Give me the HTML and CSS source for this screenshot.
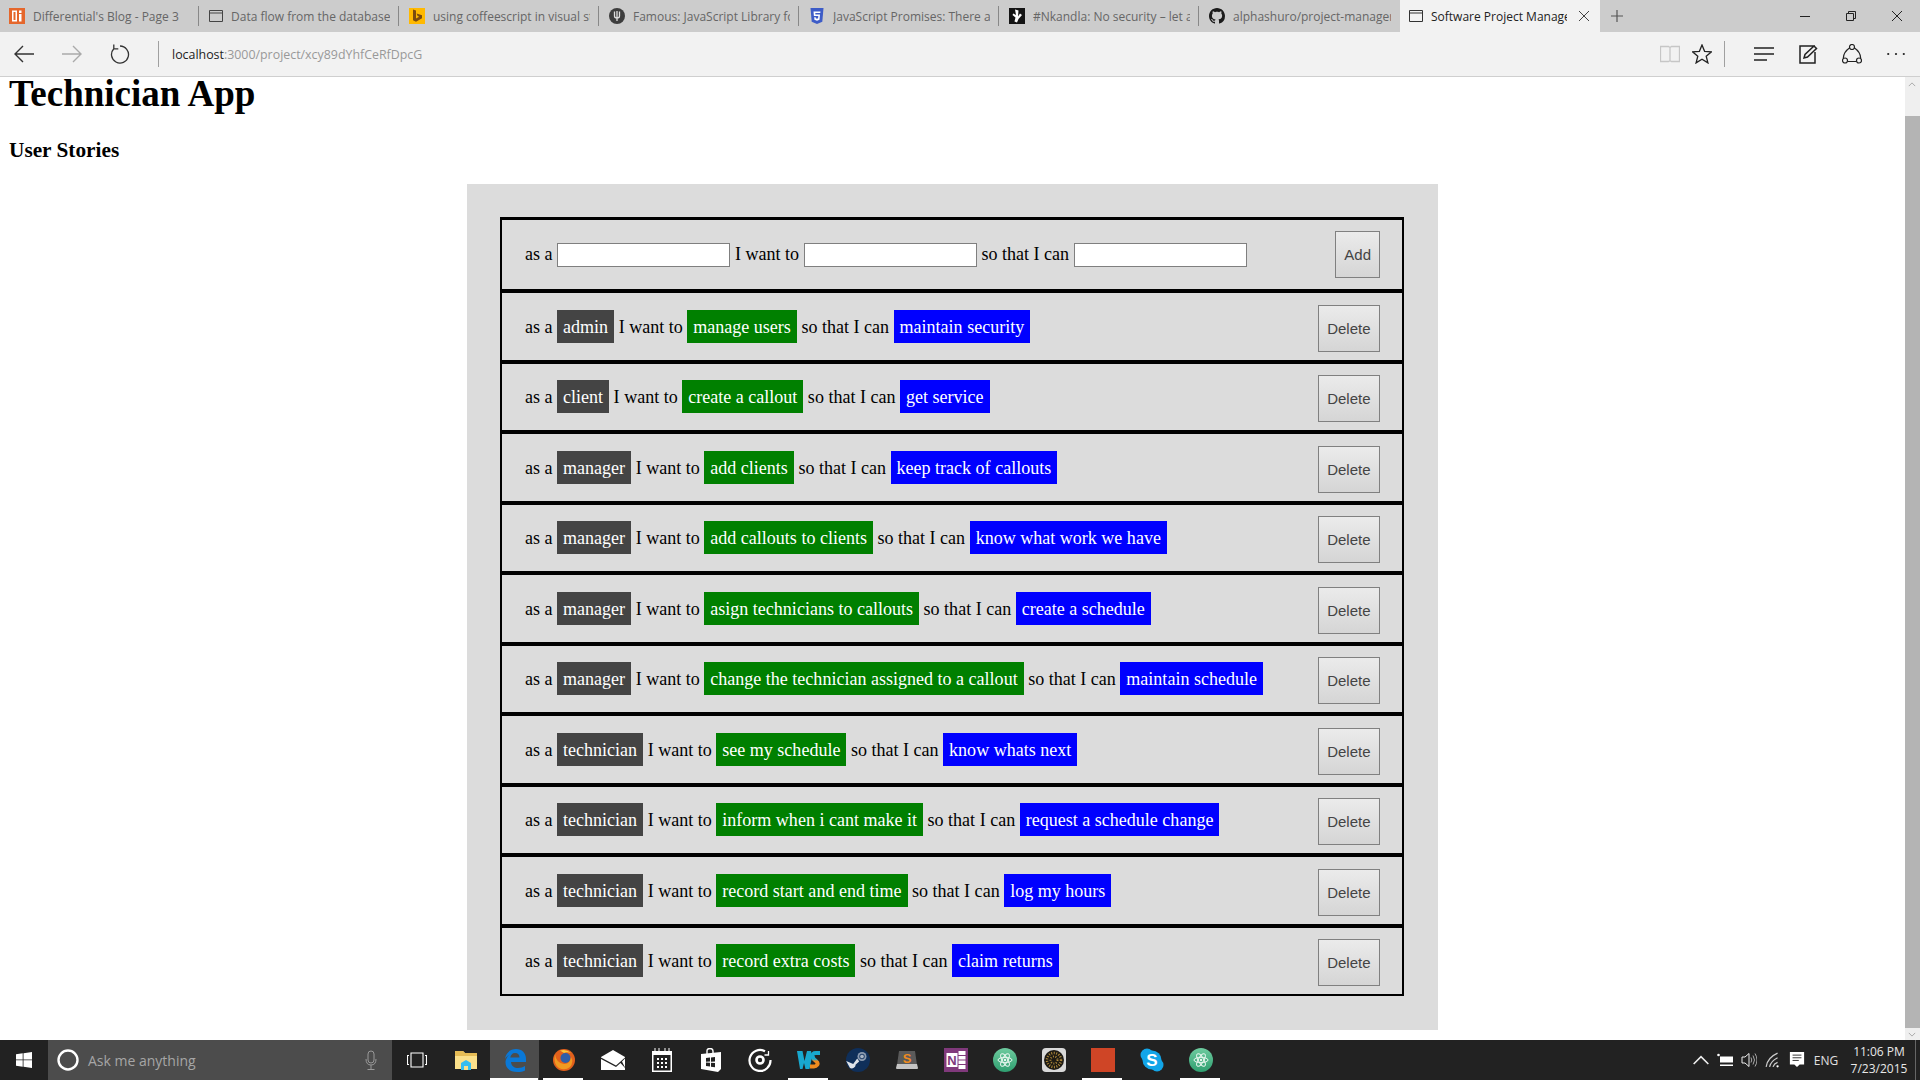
FILE: index.html
```html
<!DOCTYPE html>
<html lang="en">
<head>
<meta charset="utf-8">
<title>Software Project Manager</title>
<link rel="stylesheet" href="styles.css">
</head>
<body>
<div class="screen">
  <div class="tabstrip">
    <div class="tab">
      <svg class="fav" viewBox="0 0 16 16"><rect width="16" height="16" fill="#e5672c"/><path d="M3 2.500h5v11H3zM4.500 4v8H6.500V4z" fill="#fff" fill-rule="evenodd"/><rect x="10" y="2.500" width="2.500" height="2.500" fill="#fff"/><rect x="10" y="6" width="2.500" height="7.500" fill="#fff"/></svg>
      <span class="tab-title">Differential's Blog - Page 3</span><i class="tab-sep"></i>
    </div>
    <div class="tab">
      <svg class="fav fav-page" viewBox="0 0 14 14"><path d="M.5 1.500h13v11H.5zM.5 4h13" fill="none" stroke="#444" stroke-width="1"/></svg>
      <span class="tab-title">Data flow from the database</span><i class="tab-sep"></i>
    </div>
    <div class="tab">
      <svg class="fav" viewBox="0 0 16 16"><rect width="16" height="16" fill="#ffb900"/><path d="M4 1.500l3 1v8l3.200-1.800-1.600-.8-1-2.500 5.400 1.900v2.900L7 13.800 4 12.200z" fill="#7a4b10"/></svg>
      <span class="tab-title">using coffeescript in visual st</span><i class="tab-sep"></i>
    </div>
    <div class="tab">
      <svg class="fav" viewBox="0 0 16 16"><circle cx="8" cy="8" r="8" fill="#3d3d3d"/><path d="M5.500 3.500v4.500q0 2 2.500 2t2.500-2V3.500M8 3v10" fill="none" stroke="#ddd" stroke-width="1.300"/></svg>
      <span class="tab-title">Famous: JavaScript Library fo</span><i class="tab-sep"></i>
    </div>
    <div class="tab">
      <svg class="fav" viewBox="0 0 16 16"><path d="M1.500 0h13l-1.200 13.800L8 16l-5.300-2.200z" fill="#3d5cc7"/><path d="M11.500 3.500h-7l.4 4.500h4.400l-.2 2.300-1.100.4-1.200-.4-.1-1H5.200l.2 2.500L8 12.700l2.500-.9.5-5.300H6.400l-.1-1.500h5z" fill="#fff"/></svg>
      <span class="tab-title">JavaScript Promises: There a</span><i class="tab-sep"></i>
    </div>
    <div class="tab">
      <svg class="fav" viewBox="0 0 16 16"><rect width="16" height="16" fill="#141414"/><path d="M6 1.500l3.500 1-.5 6 2-3 2 1.500-3.500 4-1.500 3.500-2.500-1 1-4-3-2.500.8-1.500 2.700 1.500z" fill="#fff"/></svg>
      <span class="tab-title">#Nkandla: No security – let a</span><i class="tab-sep"></i>
    </div>
    <div class="tab tab-noline">
      <svg class="fav" viewBox="0 0 16 16"><path fill="#1b1b1b" d="M8 0C3.580 0 0 3.580 0 8c0 3.540 2.290 6.530 5.470 7.590.4.070.55-.17.55-.38 0-.19-.01-.82-.01-1.490-2.010.37-2.530-.49-2.690-.94-.09-.23-.48-.94-.82-1.130-.28-.15-.68-.52-.01-.53.63-.01 1.080.58 1.230.82.720 1.210 1.870.87 2.330.66.070-.52.280-.87.510-1.070-1.780-.2-3.640-.89-3.640-3.950 0-.87.310-1.590.820-2.150-.08-.2-.36-1.020.080-2.120 0 0 .67-.21 2.200.82.640-.18 1.320-.27 2-.27.68 0 1.360.09 2 .27 1.530-1.040 2.200-.82 2.200-.82.440 1.100.160 1.920.080 2.120.510.560.820 1.270.820 2.150 0 3.070-1.870 3.750-3.650 3.950.29.25.54.73.54 1.480 0 1.070-.01 1.930-.01 2.200 0 .21.15.46.55.38A8.013 8.013 0 0016 8c0-4.420-3.580-8-8-8z"/></svg>
      <span class="tab-title">alphashuro/project-manager</span>
    </div>
    <div class="tab tab-active">
      <svg class="fav fav-page" viewBox="0 0 14 14"><path d="M.5 1.500h13v11H.5zM.5 4h13" fill="none" stroke="#333" stroke-width="1"/></svg>
      <span class="tab-title">Software Project Manage</span>
      <svg class="tab-close" viewBox="0 0 12 12"><path d="M1 1l10 10M11 1L1 11" stroke="#444" stroke-width="1" fill="none"/></svg>
    </div>
    <div class="tab-new"><svg viewBox="0 0 12 12"><path d="M6 0v12M0 6h12" stroke="#555" stroke-width="1.200" fill="none"/></svg></div>
    <div class="winctl">
      <div class="winbtn"><svg viewBox="0 0 10 10"><path d="M0 5.500h10" stroke="#222" fill="none"/></svg></div>
      <div class="winbtn"><svg viewBox="0 0 10 10"><path d="M.5 2.500h7v7h-7zM2.500 2.500v-2h7v7h-2" stroke="#222" fill="none"/></svg></div>
      <div class="winbtn"><svg viewBox="0 0 10 10"><path d="M0 0l10 10M10 0L0 10" stroke="#222" fill="none"/></svg></div>
    </div>
  </div>

  <div class="toolbar">
    <div class="navbtn"><svg viewBox="0 0 20 18"><path d="M20 9H1M9 1L1 9l8 8" fill="none" stroke="#333" stroke-width="1.400"/></svg></div>
    <div class="navbtn"><svg viewBox="0 0 20 18"><path d="M0 9h19M11 1l8 8-8 8" fill="none" stroke="#aaa" stroke-width="1.400"/></svg></div>
    <div class="navbtn"><svg viewBox="0 0 20 20"><path d="M10 2a8.500 8.500 0 1 1-6.200 2.700M3.800 .5v4.300h4.500" fill="none" stroke="#333" stroke-width="1.300"/></svg></div>
    <i class="tool-sep"></i>
    <div class="url"><span class="url-host">localhost</span>:3000/project/xcy89dYhfCeRfDpcG</div>
    <div class="toolright">
      <div class="toolbtn-s"><svg viewBox="0 0 20 18"><path d="M.5 1.500h8l1.500 1 1.500-1h8v15h-8l-1.500-.8-1.500.8h-8zM10 2.500v13" fill="none" stroke="#c6c6c6" stroke-width="1.300"/></svg></div>
      <div class="toolbtn-s"><svg viewBox="0 0 20 20"><path d="M10 1l2.600 6.300 6.900.5-5.300 4.400 1.700 6.700L10 15.300 4.100 18.900l1.700-6.700L.5 7.800l6.900-.5z" fill="none" stroke="#222" stroke-width="1.300"/></svg></div>
      <i class="tool-sep tool-sep-r"></i>
      <div class="toolbtn"><svg viewBox="0 0 20 14"><path d="M0 1h20M0 7h20M0 13h13" fill="none" stroke="#222" stroke-width="1.300"/></svg></div>
      <div class="toolbtn"><svg viewBox="0 0 20 20"><path d="M17 8V19H2V2h15M6 14l1-3.500L16 2l2.500 2.500L9.500 13z" fill="none" stroke="#222" stroke-width="1.500"/></svg></div>
      <div class="toolbtn"><svg viewBox="0 0 20 20"><circle cx="10" cy="3" r="2.500" fill="none" stroke="#222" stroke-width="1.200"/><circle cx="3" cy="16.500" r="2.500" fill="none" stroke="#222" stroke-width="1.200"/><circle cx="17" cy="16.500" r="2.500" fill="none" stroke="#222" stroke-width="1.200"/><path d="M7.800 3.800Q1.500 8 1.300 14.300M12.200 3.800Q18.500 8 18.700 14.300M5.500 17.500h9" fill="none" stroke="#222" stroke-width="1.200"/></svg></div>
      <div class="toolbtn"><svg viewBox="0 0 18 4"><circle cx="2" cy="2" r="1" fill="#222"/><circle cx="9" cy="2" r="1" fill="#222"/><circle cx="16" cy="2" r="1" fill="#222"/></svg></div>
    </div>
  </div>

  <div class="viewport">
    <main class="page">
      <h1 class="app-title">Technician App</h1>
      <h2 class="section-title">User Stories</h2>
      <section class="panel">
        <div class="list">
          <div class="row row-form">
            <div class="story">as a <input class="field" type="text"> I want to <input class="field" type="text"> so that I can <input class="field" type="text"></div>
            <button class="btn btn-add">Add</button>
          </div>
          <div class="row"><div class="story">as a <span class="tag who">admin</span> I want to <span class="tag what">manage users</span> so that I can <span class="tag why">maintain security</span></div><button class="btn btn-del">Delete</button></div>
          <div class="row"><div class="story">as a <span class="tag who">client</span> I want to <span class="tag what">create a callout</span> so that I can <span class="tag why">get service</span></div><button class="btn btn-del">Delete</button></div>
          <div class="row"><div class="story">as a <span class="tag who">manager</span> I want to <span class="tag what">add clients</span> so that I can <span class="tag why">keep track of callouts</span></div><button class="btn btn-del">Delete</button></div>
          <div class="row"><div class="story">as a <span class="tag who">manager</span> I want to <span class="tag what">add callouts to clients</span> so that I can <span class="tag why">know what work we have</span></div><button class="btn btn-del">Delete</button></div>
          <div class="row"><div class="story">as a <span class="tag who">manager</span> I want to <span class="tag what">asign technicians to callouts</span> so that I can <span class="tag why">create a schedule</span></div><button class="btn btn-del">Delete</button></div>
          <div class="row"><div class="story">as a <span class="tag who">manager</span> I want to <span class="tag what">change the technician assigned to a callout</span> so that I can <span class="tag why">maintain schedule</span></div><button class="btn btn-del">Delete</button></div>
          <div class="row"><div class="story">as a <span class="tag who">technician</span> I want to <span class="tag what">see my schedule</span> so that I can <span class="tag why">know whats next</span></div><button class="btn btn-del">Delete</button></div>
          <div class="row"><div class="story">as a <span class="tag who">technician</span> I want to <span class="tag what">inform when i cant make it</span> so that I can <span class="tag why">request a schedule change</span></div><button class="btn btn-del">Delete</button></div>
          <div class="row"><div class="story">as a <span class="tag who">technician</span> I want to <span class="tag what">record start and end time</span> so that I can <span class="tag why">log my hours</span></div><button class="btn btn-del">Delete</button></div>
          <div class="row"><div class="story">as a <span class="tag who">technician</span> I want to <span class="tag what">record extra costs</span> so that I can <span class="tag why">claim returns</span></div><button class="btn btn-del">Delete</button></div>
        </div>
      </section>
    </main>
    <div class="scrollbar">
      <div class="sb-top"><svg viewBox="0 0 10 6"><path d="M1 5l4-4 4 4" fill="none" stroke="#999"/></svg></div>
      <div class="sb-thumb"></div>
      <div class="sb-bottom"><svg viewBox="0 0 10 6"><path d="M1 1l4 4 4-4" fill="none" stroke="#999"/></svg></div>
    </div>
  </div>

  <div class="taskbar">
    <div class="start"><svg viewBox="0 0 16 16"><path d="M0 2.300l6.700-1v6.200H0zM7.500 1.200L16 0v7.500H7.500zM0 8.300h6.700v6.400l-6.700-1zM7.500 8.300H16V16l-8.500-1.200z" fill="#fff"/></svg></div>
    <div class="search">
      <svg class="cortana" viewBox="0 0 22 22"><circle cx="11" cy="11" r="9.500" fill="none" stroke="#fff" stroke-width="2.400"/></svg>
      <span class="search-text">Ask me anything</span>
      <svg class="mic" viewBox="0 0 12 20"><rect x="3" y="1" width="6" height="12" rx="3" fill="none" stroke="#999"/><path d="M1 9q0 6 5 6t5-6M6 15v4M2.500 19.500h7" fill="none" stroke="#999"/></svg>
    </div>
    <div class="slot"><svg class="ic" viewBox="0 0 20 16"><path d="M4 1h12v14H4zM2 3.500H.5v9H2M18 3.500h1.500v9H18" fill="none" stroke="#fff" stroke-width="1.100"/></svg></div>
    <div class="slot"><svg class="ic ic-24" viewBox="0 0 24 24"><path d="M1 3h8l2 2h12v16H1z" fill="#fbe08a"/><path d="M1 3h8l2 2h12v3H1z" fill="#e6bc55"/><path d="M7 15l5-3 5 3v7H7z" fill="#35bdf0"/><rect x="10" y="18" width="4" height="4" fill="#fbe08a"/></svg></div>
    <div class="slot slot-active"><svg class="ic ic-24" viewBox="0 0 24 24"><path d="M2 11C3 4 8 1 13 1c6 0 10 4 10 10v3H8c.3 4 3.500 6 7 6 3 0 5-.8 7-2v4.500c-2 1-4.500 1.500-7.500 1.500C7 24 2.500 20 2.500 14.500c0-2 .5-3.500 1.500-5C5 7 8 5 10 5.500 8.500 6.500 7.500 8 7.300 9.500h9.200c0-2.500-1.500-4.500-4.500-4.500C8 5 4 7.500 2 11z" fill="#0a78d7"/></svg></div>
    <div class="slot slot-open"><svg class="ic ic-24" viewBox="0 0 24 24"><circle cx="12" cy="12" r="11" fill="#e2601c"/><circle cx="13.500" cy="10" r="5" fill="#2f5ea8"/><path d="M3 6q1 9 9 10 6 .5 7-7 3 5-1 10-5 4-11 1-6-4-4-14z" fill="#f09a22"/><path d="M8 2.500q6-2 11 2.500-5-1.500-7 0z" fill="#f8c73a"/></svg></div>
    <div class="slot"><svg class="ic ic-24" viewBox="0 0 24 20"><path d="M0 7l12-7 12 7v13H0z" fill="#fff"/><path d="M0 7.500L15 15.500 24 7.500V8.500L21 11.500 24 17.500V18L19.500 13 15 17 0 9z" fill="#222"/></svg></div>
    <div class="slot"><svg class="ic ic-20" viewBox="0 0 20 24"><path d="M0 3h2.500V0h1v3h3V0h1v3h5V0h1v3h3V0h1v3H20v21H0z" fill="#fff"/><rect x="1.500" y="7" width="17" height="15.500" fill="#222"/><path d="M5 10h2v2H5zM9 10h2v2H9zM13 10h2v2h-2zM5 14h2v2H5zM9 14h2v2H9zM13 14h2v2h-2zM5 18h2v2H5zM9 18h2v2H9zM13 18h2v2h-2z" fill="#fff"/></svg></div>
    <div class="slot"><svg class="ic ic-20" viewBox="0 0 20 24"><path d="M0 6l20-2 0 17-3 3L0 21z" fill="#fff"/><path d="M6 6V3q0-2.500 3-2.500t3 2.500v2" fill="none" stroke="#fff" stroke-width="1.400"/><path d="M5 10l4-.5v4l-4 .2zM10 9.400l4-.5v4.600l-4 .2zM5 14.500l4 .2v3.800l-4-.5zM10 14.800l4 .2v4.200l-4-.5z" fill="#222"/></svg></div>
    <div class="slot"><svg class="ic ic-24" viewBox="0 0 24 24"><path d="M17 3.200A10.500 10.500 0 1 0 22.500 12" fill="none" stroke="#fff" stroke-width="2.200"/><path d="M20.500 3v4h-4" fill="none" stroke="#fff" stroke-width="1.300"/><circle cx="12" cy="12" r="3.500" fill="none" stroke="#fff" stroke-width="2.600"/></svg></div>
    <div class="slot slot-open"><svg class="ic ic-24" viewBox="0 0 24 24"><defs><linearGradient id="wsg" x1="0" y1="0" x2="0" y2="1"><stop offset="0" stop-color="#18a8cf"/><stop offset=".45" stop-color="#18a8cf"/><stop offset=".6" stop-color="#f08b1e"/><stop offset="1" stop-color="#f08b1e"/></linearGradient></defs><path d="M0 3h5.500l2 10 2.500-10h4l1 6-2.500 12H8.500L7 15l-1.500 6H3z" fill="#18a8cf"/><path d="M23 5h-4q-4 0-3.500 3.500Q16 11 19 13q2.500 2 1 4-1 1.500-3 1.500h-4" fill="none" stroke="url(#wsg)" stroke-width="4"/></svg></div>
    <div class="slot"><svg class="ic ic-24" viewBox="0 0 24 24"><circle cx="12" cy="12" r="12" fill="#0f2f5a"/><circle cx="16" cy="8.500" r="4.500" fill="#8c9bb0"/><circle cx="16" cy="8.500" r="2.800" fill="#2a4770"/><circle cx="16" cy="8.500" r="1.800" fill="#aab6c6"/><path d="M.2 13l7 3 4-5.500 2 3-3.500 3A4 4 0 0 1 4 20z" fill="#dfe4ea"/></svg></div>
    <div class="slot"><svg class="ic ic-sub" viewBox="0 0 22 20"><path d="M3 1h16l2 14H1z" fill="#5a5a5a"/><path d="M1 14h20l1 4q0 1-1 1H1q-1 0-1-1z" fill="#c4c4c4"/><text class="ic-letter-s" x="11" y="13" text-anchor="middle">S</text></svg></div>
    <div class="slot"><svg class="ic ic-24" viewBox="0 0 24 24"><rect width="24" height="24" fill="#80397b"/><rect x="2.500" y="5" width="11" height="14" fill="#fff"/><rect x="14.500" y="3" width="7" height="4" fill="#fff"/><rect x="14.500" y="8" width="7" height="3.500" fill="#fff"/><rect x="14.500" y="12.500" width="7" height="3.500" fill="#fff"/><rect x="14.500" y="17" width="7" height="4" fill="#fff"/><text class="ic-letter-n" x="8" y="17" text-anchor="middle">N</text></svg></div>
    <div class="slot"><svg class="ic ic-24" viewBox="0 0 24 24"><defs><linearGradient id="atg1" x1="0" y1="0" x2="0" y2="1"><stop offset="0" stop-color="#6ecb9f"/><stop offset="1" stop-color="#2f9f70"/></linearGradient></defs><circle cx="12" cy="12" r="12" fill="url(#atg1)"/><g fill="none" stroke="#eaf7f0" stroke-width="1"><ellipse cx="12" cy="12" rx="7" ry="2.700"/><ellipse cx="12" cy="12" rx="7" ry="2.700" transform="rotate(60 12 12)"/><ellipse cx="12" cy="12" rx="7" ry="2.700" transform="rotate(120 12 12)"/></g><circle cx="12" cy="12" r="1.200" fill="#eaf7f0"/></svg></div>
    <div class="slot"><svg class="ic ic-24" viewBox="0 0 24 24"><rect width="24" height="24" rx="4" fill="#d9d9d9"/><circle cx="12" cy="12" r="10" fill="#1d1a14"/><circle cx="12" cy="12" r="7" fill="none" stroke="#b08a3a" stroke-width="2.500" stroke-dasharray="1 1.500"/><circle cx="12" cy="12" r="3.500" fill="none" stroke="#b08a3a" stroke-width="2" stroke-dasharray="1 1.500"/></svg></div>
    <div class="slot slot-open"><svg class="ic ic-24" viewBox="0 0 24 24"><rect width="24" height="24" fill="#cf4526"/></svg></div>
    <div class="slot"><svg class="ic ic-24" viewBox="0 0 24 24"><circle cx="7" cy="7" r="6.500" fill="#12a5e8"/><circle cx="17" cy="17" r="6.500" fill="#12a5e8"/><circle cx="12" cy="12" r="9.500" fill="#12a5e8"/><text class="ic-letter-sk" x="12" y="18" text-anchor="middle">S</text></svg></div>
    <div class="slot slot-open"><svg class="ic ic-24" viewBox="0 0 24 24"><defs><linearGradient id="atg2" x1="0" y1="0" x2="0" y2="1"><stop offset="0" stop-color="#6ecb9f"/><stop offset="1" stop-color="#2f9f70"/></linearGradient></defs><circle cx="12" cy="12" r="12" fill="url(#atg2)"/><g fill="none" stroke="#eaf7f0" stroke-width="1"><ellipse cx="12" cy="12" rx="7" ry="2.700"/><ellipse cx="12" cy="12" rx="7" ry="2.700" transform="rotate(60 12 12)"/><ellipse cx="12" cy="12" rx="7" ry="2.700" transform="rotate(120 12 12)"/></g><circle cx="12" cy="12" r="1.200" fill="#eaf7f0"/></svg></div>
    <div class="tray">
      <div class="tray-ic"><svg viewBox="0 0 12 7"><path d="M.5 6.500L6 1l5.500 5.500" fill="none" stroke="#eee" stroke-width="1.200"/></svg></div>
      <div class="tray-ic"><svg viewBox="0 0 16 13"><path d="M3 3h13v6H3z" fill="#fff"/><circle cx="1.500" cy="1.500" r="1.300" fill="#fff"/><path d="M3 11h13v1.500H3z" fill="#fff"/></svg></div>
      <div class="tray-ic"><svg viewBox="0 0 16 16"><path d="M1 5h3l4-3.500v13L4 11H1z" fill="none" stroke="#eee"/><path d="M10 5.500q1.500 2.500 0 5M12 3.500q3 4.500 0 9M14 1.500q4 6.500 0 13" fill="none" stroke="#aaa"/></svg></div>
      <div class="tray-ic"><svg viewBox="0 0 14 14"><path d="M1 13Q2 5 11 1M4 13q1-5 7-8M7 13q1-3 4-4" fill="none" stroke="#ccc" stroke-width="1.100"/><circle cx="11" cy="12.500" r="1" fill="#fff"/></svg></div>
      <div class="tray-ic"><svg viewBox="0 0 16 18"><path d="M0 0h16v14h-5l-3 3-3-3H0z" fill="#fff"/><path d="M3 3.500h10M3 6.500h10M3 9.500h7" stroke="#222"/></svg></div>
      <div class="tray-lang">ENG</div>
      <div class="clock"><span>11:06 PM</span><span>7/23/2015</span></div>
      <i class="show-desktop"></i>
    </div>
  </div>
</div>
</body>
</html>
```

FILE: styles.css
```css
* { box-sizing: border-box; }
html, body { margin: 0; padding: 0; height: 100%; overflow: hidden; }
svg { display: block; }
i { display: block; }

.screen { width: 1920px; height: 1080px; display: flex; flex-direction: column; background: #fff; }

/* tab strip */
.tabstrip { height: 32px; flex: none; display: flex; background: #cccccc; font-family: "Open Sans", "Noto Sans", sans-serif; font-size: 12px; color: #666; }
.tab { width: 200px; height: 32px; flex: none; display: flex; align-items: center; padding-left: 9px; }
.fav { width: 16px; height: 16px; flex: none; margin-right: 8px; }
.fav-page { width: 14px; height: 14px; }
.tab-title { flex: 1; min-width: 0; overflow: hidden; white-space: nowrap; padding-top: 1px; }
.tab-sep { width: 1px; height: 20px; flex: none; margin: 0 1px 0 8px; background: #888; }
.tab-noline { padding-right: 9px; }
.tab-active { background: #f2f2f2; color: #222; padding-right: 10px; }
.tab-close { width: 12px; height: 12px; flex: none; margin-left: 11px; }
.tab-new { width: 34px; display: flex; align-items: center; justify-content: center; }
.tab-new svg { width: 12px; height: 12px; }
.winctl { margin-left: auto; display: flex; }
.winbtn { width: 46px; display: flex; align-items: center; justify-content: center; }
.winbtn svg { width: 10px; height: 10px; }

/* toolbar */
.toolbar { height: 45px; flex: none; display: flex; align-items: center; background: #f2f2f2; border-bottom: 1px solid #cfcfcf; }
.navbtn { width: 48px; display: flex; justify-content: center; }
.navbtn svg { width: 20px; height: 20px; }
.tool-sep { width: 1px; height: 26px; background: #a0a0a0; margin-left: 14px; }
.url { margin-left: 13px; font-family: "Open Sans", "Noto Sans", sans-serif; font-size: 12.400px; color: #999; }
.url-host { color: #222; }
.toolright { margin-left: auto; display: flex; align-items: center; padding-right: 2px; }
.toolbtn-s { width: 32px; display: flex; justify-content: center; }
.toolbtn-s svg { width: 20px; height: 20px; }
.tool-sep-r { margin-left: 6px; margin-right: 17px; }
.toolbtn { width: 44px; display: flex; justify-content: center; }
.toolbtn svg { width: 20px; height: 20px; }

/* page */
.viewport { flex: 1; min-height: 0; display: flex; }
.page { flex: 1; min-width: 0; overflow: hidden; padding: 0 8px; font-family: "Liberation Serif", serif; color: #000; }
.app-title { font-size: 37px; font-weight: bold; margin: -4px 0 24px; line-height: 41px; padding-left: 1px; }
.section-title { font-size: 21.300px; font-weight: bold; margin: 0 0 21px; line-height: 25px; padding-left: 1px; }
.panel { width: 971px; margin: 0 auto; padding: 33px 34px 34px 33px; background: #dcdcdc; }
.list { display: flex; flex-direction: column; }
.row { height: 70.5px; flex: none; display: flex; align-items: center; justify-content: space-between; padding: 0 22px 0 23px; border: 2px solid #000; }
.row-form { height: 74px; border-top-width: 3px; }
.story { font-size: 18.050px; white-space: nowrap; }
.row-form .story { padding-top: 2px; }
.field { width: 173.400px; height: 24px; padding: 0; margin: 0 0 2px; border: 1px solid #7f7f7f; background: #fff; vertical-align: middle; }
.tag { display: inline-block; padding: 7px 6px 5px; color: #fff; }
.who { background: #444444; }
.what { background: #008000; }
.why { background: #0000ff; }
.btn { height: 47px; padding: 0 8.500px; border: 1px solid #808080; border-radius: 0; background: linear-gradient(#ebebeb, #d5d5d5); font-family: "Liberation Sans", Arial, sans-serif; font-size: 15px; color: #444; }
.btn-add { padding: 0 8px; }
.btn-del { margin-top: 4px; }

/* scrollbar */
.scrollbar { width: 15px; flex: none; display: flex; flex-direction: column; background: #efefef; }
.sb-top { height: 39px; padding: 5px 3px 0; }
.sb-top svg, .sb-bottom svg { width: 8px; height: 5px; }
.sb-thumb { flex: 1; background: #b4b4b4; }
.sb-bottom { height: 12px; padding: 4px 3px 0; }

/* taskbar */
.taskbar { height: 40px; flex: none; display: flex; align-items: stretch; background: #222222; font-family: "Open Sans", "Noto Sans", sans-serif; }
.start { width: 48px; display: flex; align-items: center; justify-content: center; }
.start svg { width: 16px; height: 16px; }
.search { width: 344px; display: flex; align-items: center; padding-left: 9px; background: #4c4c4c; }
.cortana { width: 22px; height: 22px; flex: none; }
.search-text { margin-left: 9px; font-size: 14px; color: #a6a6a6; }
.mic { width: 12px; height: 20px; margin-left: auto; margin-right: 15px; }
.slot { width: 49px; flex: none; display: flex; align-items: center; justify-content: center; position: relative; }
.slot-active { background: #4c4c4c; }
.slot-active::after { content: ""; position: absolute; left: 0; right: 1px; bottom: 0; height: 2px; background: #fff; }
.slot-open::after { content: ""; position: absolute; left: 4px; right: 5px; bottom: 0; height: 2px; background: #fff; }
.ic { width: 20px; height: 16px; }
.ic-24 { width: 24px; height: 24px; }
.ic-20 { width: 20px; height: 24px; }
.ic-sub { width: 22px; height: 20px; }
.ic-letter-s { font: bold 13px "Liberation Sans", sans-serif; fill: #f08b1e; }
.ic-letter-n { font: bold 13px "Liberation Sans", sans-serif; fill: #80397b; }
.ic-letter-sk { font: bold 17px "Liberation Sans", sans-serif; fill: #fff; }
.tray { margin-left: auto; display: flex; align-items: center; }
.tray-ic { width: 24px; display: flex; justify-content: center; }
.tray-ic svg { width: 16px; height: 16px; }
.tray-lang { width: 34px; text-align: center; font-size: 12px; color: #e0e0e0; }
.clock { width: 72px; display: flex; flex-direction: column; align-items: center; font-size: 12px; line-height: 17px; color: #e8e8e8; }
.show-desktop { width: 5px; height: 40px; border-left: 1px solid #666; }
```
